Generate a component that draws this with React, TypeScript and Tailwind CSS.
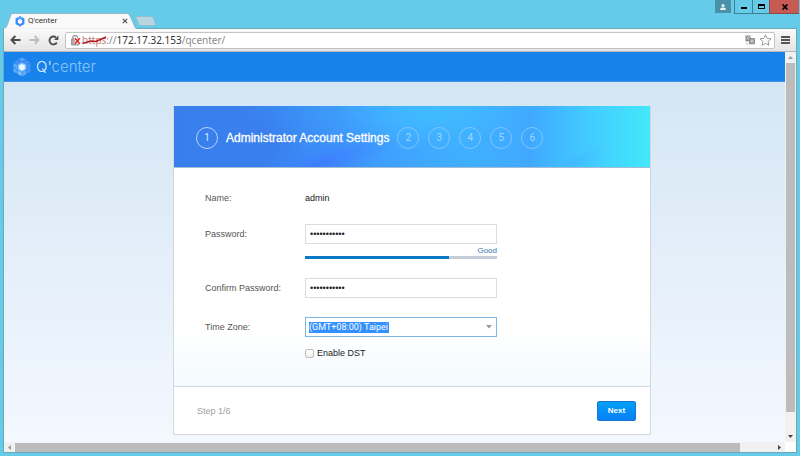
import { useState } from "react";
import type { ReactNode } from "react";

const STEPS = [2, 3, 4, 5, 6];

function HexIcon() {
  return (
    <svg viewBox="0 0 10 11" className="h-[11px] w-[10px] shrink-0" aria-hidden="true">
      <path d="M5 0 6.6 1.2 9.4 2.2V8.2L6.4 9.6 5 11 3.5 9.6.6 8.2V2.2L3.4 1.2Z" fill="#3a8cf6" />
      <path d="M5 0 6.6 1.2 9.4 2.2 5 4.2.6 2.2 3.4 1.2Z" fill="#56a5ff" />
      <path d="M5 3 7.1 4.2V6.8L5 8 2.900 6.8V4.2Z" fill="#fff" />
    </svg>
  );
}

function CubeLogo() {
  return (
    <svg viewBox="0 0 18 20" className="h-5 w-[18px] shrink-0" aria-hidden="true">
      <path d="M9 .5 13 2.6 9 4.7 5 2.6Z" fill="#5a9dff" />
      <path d="M4.3 3.2 8.4 5.2 4.5 7.2.6 5.1ZM13.7 3.2 17.4 5.1 13.5 7.2 9.6 5.2Z" fill="#4a90fa" />
      <path d="M.4 5.8 4.3 7.9V12L.4 10ZM.4 10.8 4.3 12.8V16.8L.4 14.7Z" fill="#5fa9fa" />
      <path d="M4.9 13.2 8.7 15.2V19.3L4.9 17.2Z" fill="#83bdfb" />
      <path d="M17.6 5.8 13.7 7.9V12L17.6 10ZM17.6 10.8 13.7 12.8V16.8L17.6 14.7Z" fill="#4593f7" />
      <path d="M13.1 13.2 9.3 15.2V19.3L13.1 17.2Z" fill="#64a9f9" />
      <path d="M9 5.2 13.4 7.6V12.6L9 15 4.6 12.6V7.6Z" fill="#83c3ff" />
      <path d="M9 7 11.8 8.5V11.8L9 13.4 6.2 11.8V8.5Z" fill="#eefaff" />
    </svg>
  );
}

function BackIcon() {
  return (
    <svg viewBox="0 0 11 10" className="h-[10px] w-[11px]" fill="none" stroke="currentColor" strokeWidth="2" aria-hidden="true">
      <path d="M5.4 1 1.5 5l3.9 4M1.8 5H10.5" />
    </svg>
  );
}

function ForwardIcon() {
  return (
    <svg viewBox="0 0 11 10" className="h-[10px] w-[11px]" fill="none" stroke="currentColor" strokeWidth="1.8" aria-hidden="true">
      <path d="M5.6 1 9.5 5 5.6 9M9.2 5H.5" />
    </svg>
  );
}

function ReloadIcon() {
  return (
    <svg viewBox="0 0 11 11" className="h-[11px] w-[11px]" fill="none" stroke="currentColor" strokeWidth="1.9" aria-hidden="true">
      <path d="M8.8 7.4A3.9 3.9 0 1 1 8 2.5" />
      <path d="M10.4.6V5H6Z" fill="currentColor" stroke="none" />
    </svg>
  );
}

function BrokenLockIcon() {
  return (
    <svg viewBox="0 0 11 11" className="h-[11px] w-[11px] shrink-0" aria-hidden="true">
      <path d="M1.700 4.500V3a2.500 2.500 0 0 1 5 0v1.500" fill="none" stroke="#999" strokeWidth="1.300" />
      <path d="M.5 4h7.500v6H.5Z" fill="#aaa" stroke="#8b8b8b" strokeWidth=".8" />
      <path d="m4.200 3.500 4.300 5M8.500 3.500l-4.300 5" stroke="#fff" strokeWidth="2.800" />
      <path d="m4 3.300 4.700 5.400M8.700 3.300 4 8.700" stroke="#e0201c" strokeWidth="1.500" />
    </svg>
  );
}

function TranslateIcon() {
  return (
    <svg viewBox="0 0 10 10" className="h-[10px] w-[10px]" aria-hidden="true">
      <path d="M.5.5h5v5.8h-5Z" fill="#888" />
      <path d="M4.7 2a1.5 1.5 0 1 0 0 2.4V3.2H3.5" fill="none" stroke="#fff" strokeWidth=".7" />
      <path d="M4.5 3.5h5v5.3h-5Z" fill="#999" stroke="#777" strokeWidth=".7" />
      <path d="M5.7 5.3h2.8M7.1 4.7c0 1.6-.6 2.5-1.4 3M6.2 6c.5 1 1.2 1.4 2.1 1.7" fill="none" stroke="#eee" strokeWidth=".6" />
      <path d="M1 7.5c.4 1 1.2 1.6 2.5 1.6" fill="none" stroke="#999" strokeWidth=".8" />
    </svg>
  );
}

function StarIcon() {
  return (
    <svg viewBox="0 0 13 12" className="h-3 w-[13px]" fill="#fff" stroke="#999" strokeWidth="1" aria-hidden="true">
      <path d="m6.5.8 1.6 3.6 4 .4-3 2.7.9 3.8-3.5-2-3.5 2 .9-3.8-3-2.7 4-.4Z" />
    </svg>
  );
}

function Arrow({ dir }: { dir: "up" | "down" | "left" | "right" }) {
  const paths = {
    up: "M0 4 2.5 1 5 4Z",
    down: "M0 1 2.5 4 5 1Z",
    left: "M4 0 1 2.5 4 5Z",
    right: "M1 0 4 2.5 1 5Z",
  };
  const muted = dir === "up" || dir === "left";
  return (
    <svg viewBox="0 0 5 5" className="h-[5px] w-[5px]" fill={muted ? "#999" : "#444"} aria-hidden="true">
      <path d={paths[dir]} />
    </svg>
  );
}

function TitleBar() {
  return (
    <div className="flex h-7 items-start justify-between pr-px pl-[3px]">
      <div className="flex h-7 items-end">
        <div className="relative z-10 -mb-px flex h-4 w-[134px] items-center pr-[9px] pl-3">
          <svg viewBox="0 0 134 16" preserveAspectRatio="none" className="absolute inset-0 h-full w-full" aria-hidden="true">
            <path d="M0 16C3 15.500 3.500 14 4.500 11.500L7.500 3C8 1 9 .5 11 .5H123C125 .5 126 1 127 3L131 12C132 14.500 132 15.500 134 16Z" fill="#f9f9f9" stroke="#8ba9b3" strokeWidth=".7" />
            <path d="M1 16H133" stroke="#f9f9f9" strokeWidth="1.500" />
          </svg>
          <span className="relative flex flex-1 items-center gap-[3px]">
            <HexIcon />
            <span className="font-['Roboto','Open_Sans',sans-serif] text-[8px] leading-3 text-[#333]">Q'center</span>
          </span>
          <button type="button" aria-label="Close tab" className="relative flex h-2 w-[6px] items-center">
            <svg viewBox="0 0 6 6" className="h-[6px] w-[6px]" stroke="#555" strokeWidth="1.200" aria-hidden="true">
              <path d="m.8.8 4.400 4.400M5.200.8.8 5.200" />
            </svg>
          </button>
        </div>
        <button type="button" aria-label="New tab" className="mb-[2px] -ml-[2px] h-[10px] w-[21px]">
          <svg viewBox="0 0 21 10" className="h-[10px] w-[21px]" aria-hidden="true">
            <path d="M2 .5H16.500C17.500.5 18 1 18.400 2L20.400 8C20.600 9 20.300 9.500 19.500 9.500H6C4.500 9.500 4 9 3.500 8L1.200 2C.9 1 1 .5 2 .5Z" fill="#b7d5e0" stroke="#91b9c6" strokeWidth=".8" />
          </svg>
        </button>
      </div>
      <div className="flex h-[14px] items-start">
        <button type="button" aria-label="Profile" className="mr-[3px] flex h-[13px] w-4 items-center justify-center bg-[#4a91a8]">
          <svg viewBox="0 0 6 6" className="h-[6px] w-[6px]" fill="#e4f3f7" aria-hidden="true">
            <circle cx="3" cy="1.500" r="1.500" />
            <path d="M.2 6V4.600L2 3.400H4L5.800 4.600V6Z" />
          </svg>
        </button>
        <button type="button" aria-label="Minimize" className="flex h-[14px] w-[18px] items-center justify-center border-b border-l border-[#3f7d90]">
          <span className="mt-[3px] h-[2px] w-[6px] bg-black" />
        </button>
        <button type="button" aria-label="Maximize" className="flex h-[14px] w-[17px] items-center justify-center border-b border-l border-[#3f7d90]">
          <span className="h-[5px] w-[7px] border border-t-2 border-black" />
        </button>
        <button type="button" aria-label="Close window" className="flex h-[14px] w-[30px] items-center justify-center border-b border-l border-[#8a4a4a] bg-[#c75b54]">
          <svg viewBox="0 0 6 6" className="h-[6px] w-[6px]" stroke="#000" strokeWidth="1.600" aria-hidden="true">
            <path d="m.6.4 4.800 5.200M5.400.4.6 5.600" />
          </svg>
        </button>
      </div>
    </div>
  );
}

function Toolbar() {
  return (
    <div className="flex h-[23px] items-center border-b border-[#b8b8b8] bg-linear-to-b from-[#fafafa] to-[#e4e4e4] pr-[6px] pl-[6px]">
      <div className="flex items-center gap-2 text-[#4d4d4d]">
        <button type="button" aria-label="Back"><BackIcon /></button>
        <button type="button" aria-label="Forward" className="text-[#bdbdbd]"><ForwardIcon /></button>
        <button type="button" aria-label="Reload"><ReloadIcon /></button>
      </div>
      <div className="mr-[6px] ml-[6px] flex h-[17px] flex-1 items-center rounded-xs border border-[#c4c4c4] bg-white pr-[2px] pl-[5px]">
        <BrokenLockIcon />
        <div className="flex-1 font-['Noto_Sans','Open_Sans',sans-serif] text-[10px] leading-[15px] text-[#8a8a8a]">
          <span className="relative text-[#c77a7a]">
            https
            <svg viewBox="0 0 25 9" className="absolute top-[3px] left-0 h-[9px] w-[25px]" fill="none" stroke="#b3191c" strokeWidth="1.500" aria-hidden="true">
              <path d="M.5 7.500 9 5 14 5.500 24 1" />
            </svg>
          </span>
          ://<span className="text-[#333]">172.17.32.153</span>/qcenter/
        </div>
        <div className="flex items-center gap-1">
          <button type="button" aria-label="Translate"><TranslateIcon /></button>
          <button type="button" aria-label="Bookmark"><StarIcon /></button>
        </div>
      </div>
      <button type="button" aria-label="Menu" className="flex w-[9px] flex-col gap-px">
        <span className="h-[2px] bg-[#555]" />
        <span className="h-[2px] bg-[#555]" />
        <span className="h-[2px] bg-[#555]" />
      </button>
    </div>
  );
}

function StepCircle({ children, active = false }: { children: ReactNode; active?: boolean }) {
  return (
    <span
      className={
        active
          ? "flex size-[22px] items-center justify-center rounded-full border border-[#b9d3fb] font-['Roboto',sans-serif] text-[10px] text-[#dce9ff]"
          : "flex size-[22px] items-center justify-center rounded-full border border-[#80c6ff] font-['Roboto',sans-serif] text-[10px] text-[#a0d6ff]"
      }
    >
      {children}
    </span>
  );
}

function WizardHeader() {
  return (
    <header className="relative h-[62px] border-b border-[#a3bdd6]">
      <svg viewBox="0 0 478 62" preserveAspectRatio="none" className="absolute inset-0 h-full w-full" aria-hidden="true">
        <defs>
          <linearGradient id="base" x1="0" x2="1">
            <stop offset="0" stopColor="#397fec" />
            <stop offset=".2" stopColor="#397fee" />
            <stop offset=".45" stopColor="#3f9cff" />
            <stop offset=".6" stopColor="#40b0ff" />
            <stop offset=".75" stopColor="#40a9ff" />
            <stop offset=".87" stopColor="#42cbff" />
            <stop offset="1" stopColor="#43e8fa" />
          </linearGradient>
          <linearGradient id="glow" gradientUnits="userSpaceOnUse" x1="120" y1="45" x2="170" y2="-35">
            <stop offset="0" stopColor="#3ea4ff" stopOpacity="0" />
            <stop offset=".7" stopColor="#3faaff" stopOpacity=".9" />
            <stop offset="1" stopColor="#40b0ff" />
          </linearGradient>
          <radialGradient id="sky" gradientUnits="userSpaceOnUse" cx="0" cy="0" r="1" gradientTransform="translate(262 2) scale(100 44)">
            <stop offset="0" stopColor="#40bcff" />
            <stop offset=".5" stopColor="#40b8ff" stopOpacity=".7" />
            <stop offset="1" stopColor="#40b0ff" stopOpacity="0" />
          </radialGradient>
          <radialGradient id="deep" gradientUnits="userSpaceOnUse" cx="0" cy="0" r="1" gradientTransform="translate(148 58) rotate(-18) scale(78 20)">
            <stop offset="0" stopColor="#3d7dff" />
            <stop offset="1" stopColor="#3d8cff" stopOpacity="0" />
          </radialGradient>
          <linearGradient id="beam" gradientUnits="userSpaceOnUse" x1="146" y1="29" x2="157" y2="49">
            <stop offset="0" stopColor="#40a4ff" stopOpacity="0" />
            <stop offset=".8" stopColor="#409cff" stopOpacity=".55" />
            <stop offset="1" stopColor="#409cff" stopOpacity="0" />
          </linearGradient>
          <radialGradient id="corner" gradientUnits="userSpaceOnUse" cx="0" cy="0" r="1" gradientTransform="translate(400 58) rotate(-22) scale(48 14)">
            <stop offset="0" stopColor="#40b4ff" stopOpacity=".7" />
            <stop offset="1" stopColor="#42c8ff" stopOpacity="0" />
          </radialGradient>
        </defs>
        <path d="M0 0H478V62H0Z" fill="url(#base)" />
        <path d="M40 0H300V62H40Z" fill="url(#glow)" opacity=".6" />
        <path d="M100 0H400V62H100Z" fill="url(#sky)" />
        <path d="M60 20H300V62H60Z" fill="url(#deep)" />
        <path d="M90 62 222 0H180L60 62Z" fill="url(#beam)" />
        <path d="M378 62 478 18V62Z" fill="url(#corner)" />
      </svg>
      <div className="relative flex h-full items-center gap-2 pt-[2px] pl-[22px]">
        <StepCircle active>1</StepCircle>
        <h1 className="text-[12px] leading-4 text-white [-webkit-text-stroke:0.3px_white]">Administrator Account Settings</h1>
        <div className="flex gap-[9px]">
          {STEPS.map((n) => (
            <StepCircle key={n}>{n}</StepCircle>
          ))}
        </div>
      </div>
    </header>
  );
}

function Wizard() {
  const [password, setPassword] = useState("adminadmin1");
  const [confirm, setConfirm] = useState("adminadmin1");
  const [dst, setDst] = useState(false);
  const input =
    "block h-5 w-full border border-[#dcdcdc] bg-white px-1 font-['Liberation_Sans',sans-serif] text-[9px] text-[#222] outline-none";

  return (
    <form
      onSubmit={(e) => e.preventDefault()}
      className="w-[478px] max-w-full border border-t-0 border-[#d3d8dd] bg-white font-['Liberation_Sans',Arial,sans-serif] text-[9px] leading-5 text-[#555]"
    >
      <WizardHeader />
      <div className="bg-linear-to-b from-white from-75% to-[#f3fafe] pt-[20px] pb-[27px] pl-[31px]">
        <div className="grid grid-cols-[100px_192px]">
          <span>Name:</span>
          <span className="text-[#222]">admin</span>

          <label htmlFor="password" className="mt-4">Password:</label>
          <div className="mt-4">
            <input id="password" type="password" className={input} value={password} onChange={(e) => setPassword(e.target.value)} />
            <div className="pt-[2px] text-right text-[8px] leading-[10px] text-[#3575ad]">Good</div>
            <div className="h-[3px] bg-[#c3ced9]">
              <div className="h-full w-3/4 bg-[#0a7ac6]" />
            </div>
          </div>

          <label htmlFor="confirm" className="mt-[19px]">Confirm Password:</label>
          <div className="mt-[19px]">
            <input id="confirm" type="password" className={input} value={confirm} onChange={(e) => setConfirm(e.target.value)} />
          </div>

          <label htmlFor="timezone" className="mt-[19px]">Time Zone:</label>
          <div className="mt-[19px] flex h-5 items-center justify-between border border-[#7fb5e2] bg-white pr-1 pl-[3px]">
            <select id="timezone" className="h-[11px] appearance-none bg-[#3390ff] font-['Roboto','Liberation_Sans',sans-serif] text-[9px] leading-[11px] text-white outline-none">
              <option>(GMT+08:00) Taipei</option>
            </select>
            <svg viewBox="0 0 6 4" className="h-1 w-[6px]" fill="#999" aria-hidden="true">
              <path d="M0 0H6L3 3.500Z" />
            </svg>
          </div>

          <label className="col-start-2 mt-[10px] flex h-3 items-center gap-[3px] leading-3 text-[#222]">
            <input
              type="checkbox"
              checked={dst}
              onChange={(e) => setDst(e.target.checked)}
              className="size-[9px] appearance-none rounded-[2px] border border-[#bdbdbd] bg-linear-to-b from-white to-[#eee] checked:bg-[#0a7ac6]"
            />
            Enable DST
          </label>
        </div>
      </div>
      <footer className="flex h-12 items-center justify-between border-t border-[#d3d8dd] bg-white pr-[14px] pl-[23px]">
        <span className="text-[#a0a0a0]">Step 1/6</span>
        <button type="submit" className="h-5 w-[39px] rounded-xs border border-[#1478d4] bg-linear-to-b from-[#05a0f5] to-[#087ff8] text-[8px] leading-[18px] font-bold text-white">
          Next
        </button>
      </footer>
    </form>
  );
}

export default function App() {
  return (
    <div className="flex min-h-screen flex-col bg-[#66cbe9]">
      <TitleBar />
      <div className="mx-[3px] mb-[3px] flex flex-1 flex-col border border-[#6ea9b8]">
        <Toolbar />
        <div className="flex flex-1">
          <div className="flex min-w-0 flex-1 flex-col">
            <div className="flex h-[30px] items-center gap-[5px] border-b border-[#3f92e6] bg-[#1682ea] pl-[9px]">
              <CubeLogo />
              <span className="font-['Inter',sans-serif] text-[15px] leading-5 font-light text-[#8cc5fa]">
                <span className="text-[#e4f1ff]">Q'</span>center
              </span>
            </div>
            <main className="flex flex-1 flex-col items-center bg-linear-to-b from-[#d4e6f4] to-[#f4f8ff] px-4 pt-6 pb-[6px]">
              <div className="flex w-full flex-col items-center pl-[35px]">
                <Wizard />
              </div>
            </main>
          </div>
          <div className="flex w-[11px] flex-col items-center bg-[#f1f1f1]">
            <div className="flex h-[11px] items-center"><Arrow dir="up" /></div>
            <div className="w-[9px] grow-[19] bg-[#bcbcbc]" />
            <div className="grow" />
            <div className="flex h-3 items-center"><Arrow dir="down" /></div>
          </div>
        </div>
        <div className="flex h-[10px] items-center bg-[#f1f1f1]">
          <div className="flex w-[11px] justify-center"><Arrow dir="left" /></div>
          <div className="h-[9px] grow-[22] bg-[#bcbcbc]" />
          <div className="grow" />
          <div className="flex w-3 justify-center"><Arrow dir="right" /></div>
          <div className="h-[10px] w-[11px] bg-white" />
        </div>
      </div>
    </div>
  );
}
